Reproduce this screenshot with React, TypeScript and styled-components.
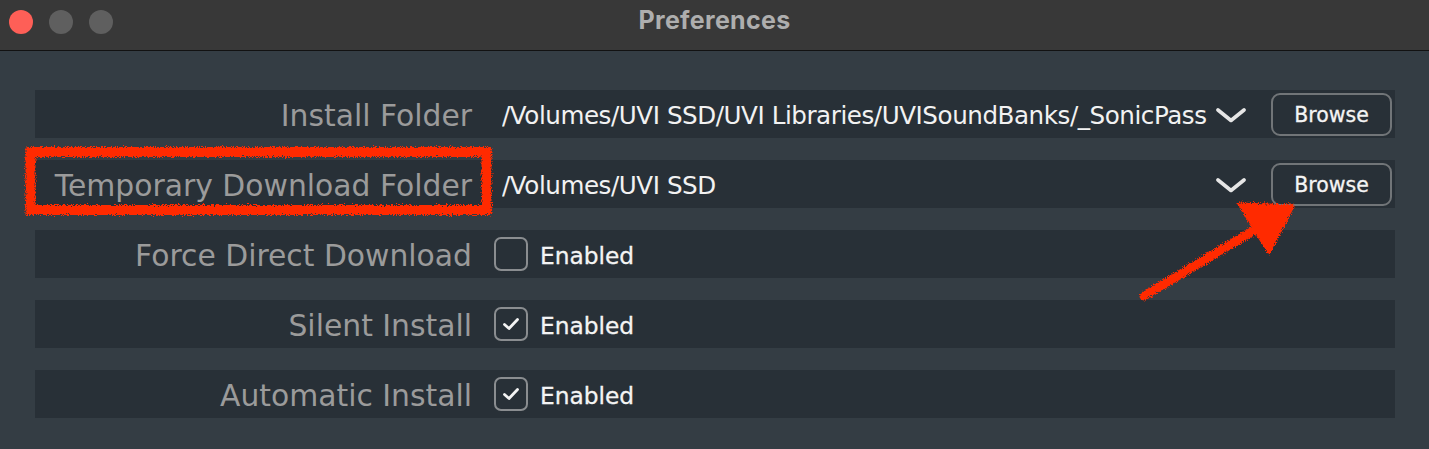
import React from "react";
import styled, { createGlobalStyle } from "styled-components";

const Global = createGlobalStyle`
  html, body { margin: 0; padding: 0; background: #343d44; }
  body { font-family: "DejaVu Sans", "Liberation Sans", sans-serif; }
  * { box-sizing: border-box; }
`;

const Window = styled.div`
  position: relative;
  width: 1429px;
  height: 449px;
  display: flex;
  flex-direction: column;
  overflow: hidden;
  background: #343d44;
`;

const TitleBar = styled.div`
  height: 51px;
  flex: none;
  display: flex;
  align-items: center;
  position: relative;
  background: #383838;
  border-bottom: 1px solid #121212;
  padding-left: 9px;
  padding-bottom: 6px;
`;

const Lights = styled.div`
  display: flex;
  gap: 16px;
`;

const Light = styled.span<{ $color: string }>`
  width: 24px;
  height: 24px;
  border-radius: 50%;
  background: ${(p) => p.$color};
`;

const Title = styled.div`
  position: absolute;
  left: 0;
  right: 0;
  top: 5px;
  text-align: center;
  font-family: Inter, "Liberation Sans", sans-serif;
  font-weight: 700;
  font-size: 25px;
  color: #aeaeae;
  letter-spacing: 0.3px;
`;

const Body = styled.div`
  flex: 1;
  display: flex;
  flex-direction: column;
  gap: 22px;
  padding: 39px 34px 0 35px;
`;

const Row = styled.div`
  height: 48px;
  display: grid;
  grid-template-columns: 437px 1fr;
  align-items: center;
  background: #283037;
`;

const Label = styled.div`
  text-align: right;
  font-size: 29.8px;
  color: #9b9b9b;
  white-space: nowrap;
  line-height: 1;
  padding-top: 4px;
`;

const Content = styled.div<{ $pad: number }>`
  display: flex;
  align-items: center;
  padding-left: ${(p) => p.$pad}px;
  min-width: 0;
  height: 100%;
`;

const Value = styled.div`
  flex: 1;
  min-width: 0;
  white-space: nowrap;
  overflow: hidden;
  font-size: 24.6px;
  letter-spacing: -0.45px;
  color: #f2f2f2;
  line-height: 1.3;
  padding-top: 4px;
`;

const Chevron = styled.svg`
  flex: none;
  width: 30px;
  height: 15px;
  margin-right: 25px;
  margin-top: 2px;
`;

const BrowseButton = styled.button`
  flex: none;
  width: 121px;
  height: 43px;
  margin-right: 3px;
  border: 2px solid #717578;
  border-radius: 9px;
  background: #283037;
  color: #f4f4f4;
  font-family: "DejaVu Sans", sans-serif;
  font-size: 20.5px;
  padding: 2px 0 0;
  -webkit-text-stroke: 0.3px #f4f4f4;
`;

const Box = styled.span`
  flex: none;
  width: 34px;
  height: 34px;
  border: 2px solid #8a8d90;
  border-radius: 7px;
  display: flex;
  align-items: center;
  justify-content: center;
  margin-right: 12px;
`;

const CheckText = styled.span`
  font-size: 23.3px;
  color: #f4f4f4;
  line-height: 1;
  padding-top: 3px;
  -webkit-text-stroke: 0.3px #f4f4f4;
`;

const Annotations = styled.svg`
  position: absolute;
  left: 0;
  top: 0;
  width: 1429px;
  height: 449px;
  pointer-events: none;
`;

const ChevronIcon = () => (
  <Chevron viewBox="0 0 30 15">
    <polyline points="2,2 15,12.5 28,2" fill="none" stroke="#e6e6e6" strokeWidth="3.6" strokeLinecap="round" strokeLinejoin="round" />
  </Chevron>
);

const PathRow = ({ label, value }: { label: string; value: string }) => (
  <Row>
    <Label>{label}</Label>
    <Content $pad={30}>
      <Value>{value}</Value>
      <ChevronIcon />
      <BrowseButton>Browse</BrowseButton>
    </Content>
  </Row>
);

const CheckRow = ({ label, checked }: { label: string; checked: boolean }) => (
  <Row>
    <Label>{label}</Label>
    <Content $pad={22}>
      <Box>
        {checked && (
          <svg width="18" height="14" viewBox="0 0 18 14">
            <polyline points="2.5,7.5 7,11.5 15.5,2.5" fill="none" stroke="#f4f4f4" strokeWidth="2.8" strokeLinecap="round" strokeLinejoin="round" />
          </svg>
        )}
      </Box>
      <CheckText>Enabled</CheckText>
    </Content>
  </Row>
);

export default function App() {
  return (
    <Window>
      <Global />
      <TitleBar>
        <Lights>
          <Light $color="#fe5f57" />
          <Light $color="#5f5f5f" />
          <Light $color="#5f5f5f" />
        </Lights>
        <Title>Preferences</Title>
      </TitleBar>
      <Body>
        <PathRow label="Install Folder" value="/Volumes/UVI SSD/UVI Libraries/UVISoundBanks/_SonicPass" />
        <PathRow label="Temporary Download Folder" value="/Volumes/UVI SSD" />
        <CheckRow label="Force Direct Download" checked={false} />
        <CheckRow label="Silent Install" checked />
        <CheckRow label="Automatic Install" checked />
      </Body>
      <Annotations viewBox="0 0 1429 449">
        <defs>
          <filter id="rough" x="-5%" y="-20%" width="110%" height="140%">
            <feTurbulence type="fractalNoise" baseFrequency="0.9" numOctaves="2" seed="3" result="n" />
            <feDisplacementMap in="SourceGraphic" in2="n" scale="6" xChannelSelector="R" yChannelSelector="G" />
          </filter>
        </defs>
        <g filter="url(#rough)" fill="#ff2a06" stroke="#ff2a06">
          <rect x="30.5" y="152" width="456" height="58" fill="none" strokeWidth="10" />
          <line x1="1144" y1="296" x2="1258" y2="228" strokeWidth="9" strokeLinecap="round" />
          <polygon points="1239,204 1293,206 1269,253" strokeWidth="3" strokeLinejoin="round" />
        </g>
      </Annotations>
    </Window>
  );
}
